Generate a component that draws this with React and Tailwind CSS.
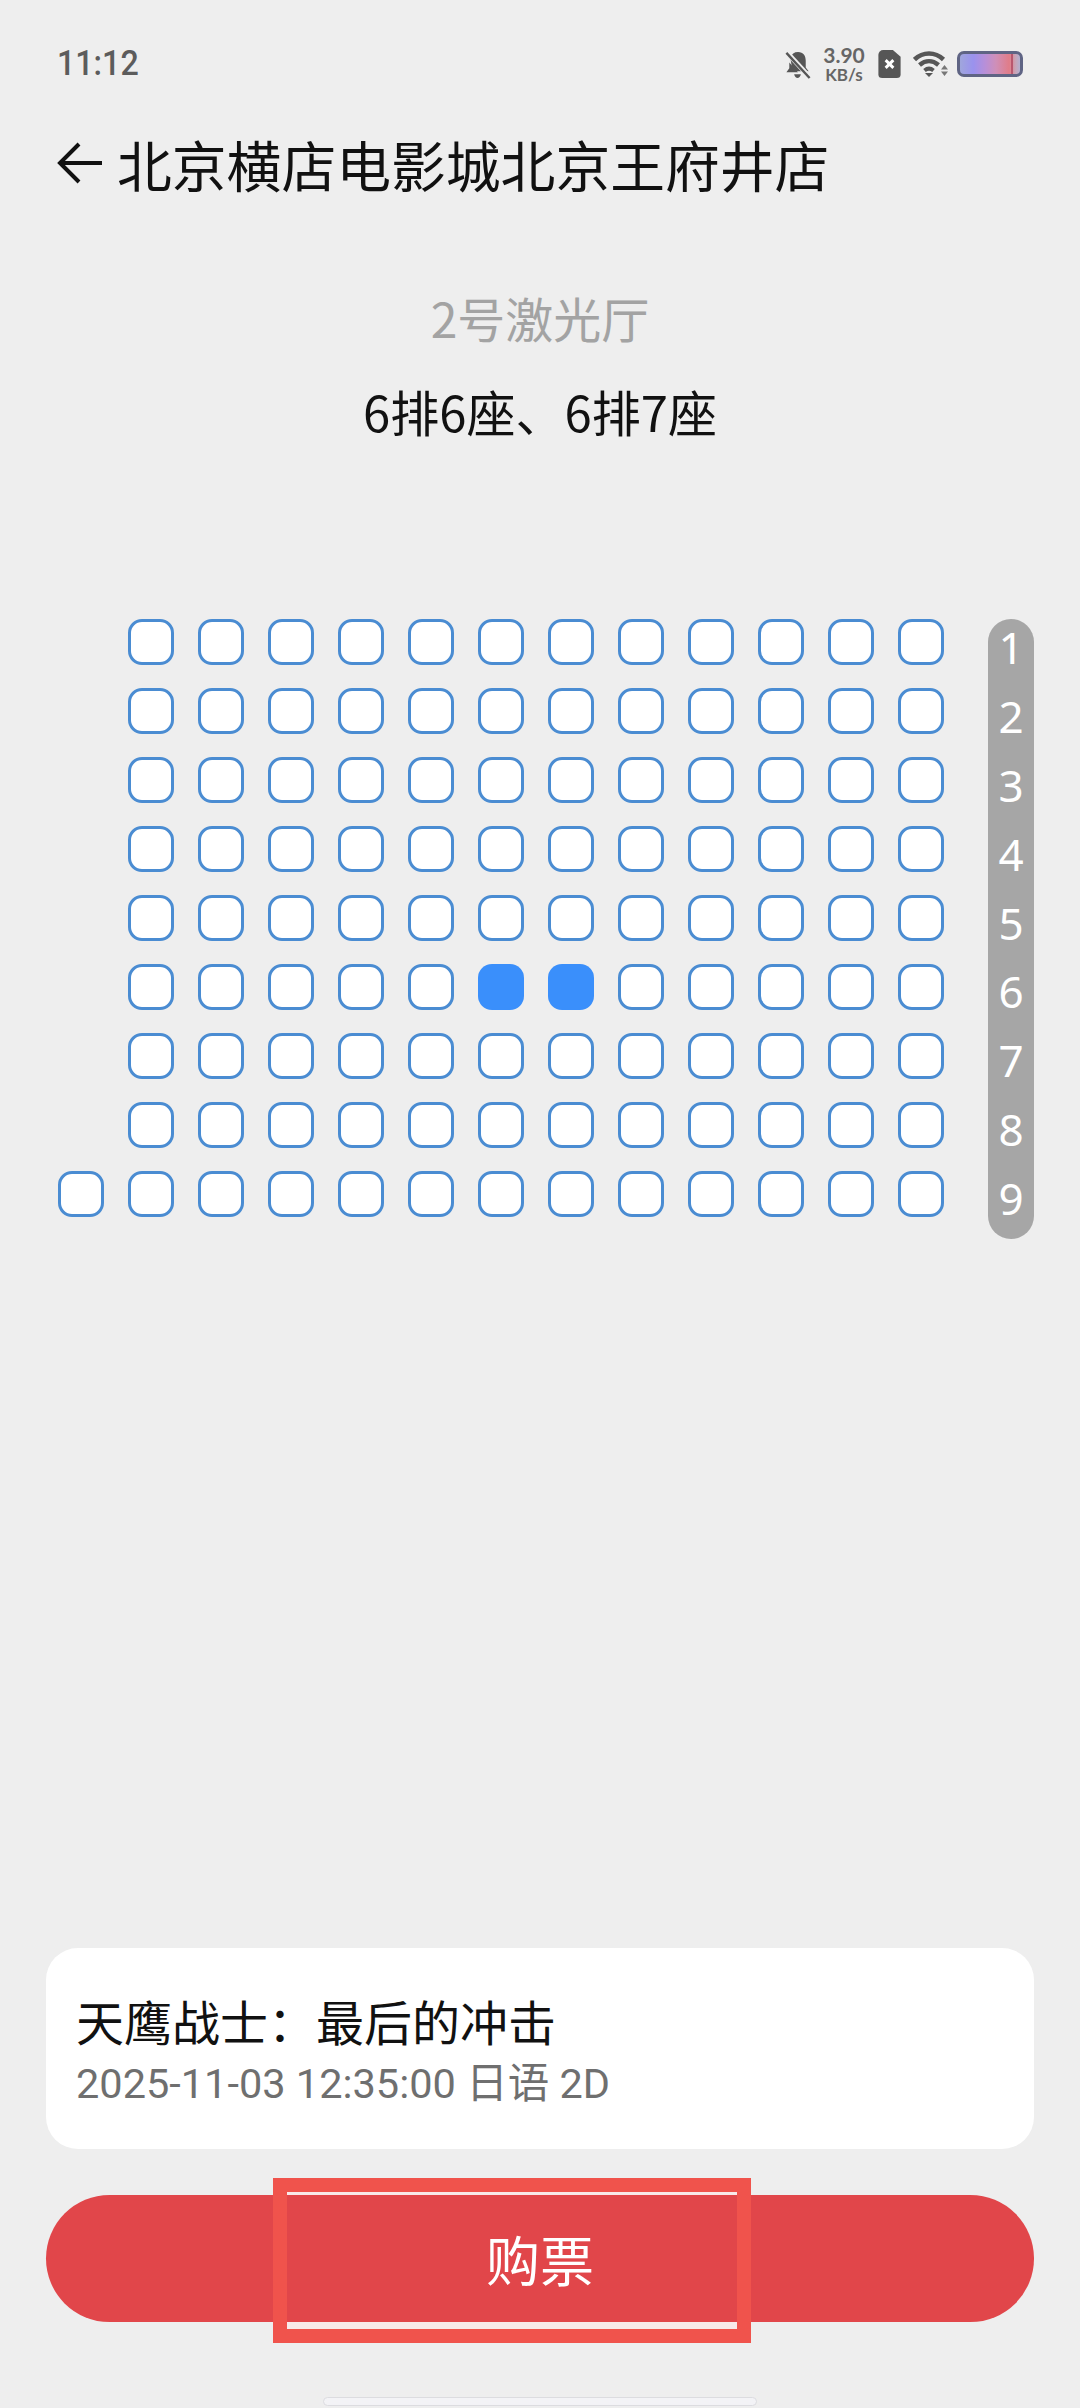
const cjk = "font-['Noto_Sans_CJK_SC','Noto_Sans',sans-serif]";
const rows = [1, 2, 3, 4, 5, 6, 7, 8, 9];
const cols = [0, 1, 2, 3, 4, 5, 6, 7, 8, 9, 10, 11, 12];

const StatusIcons = () => (
  <div className="flex items-center">
    <svg width="26" height="29" viewBox="0 0 26 30" className="mr-[11px]">
      <path d="M13 2c5.600 0 8 4 8 9v7l3 4H7.500L5 8C6.500 4 9 2 13 2z" fill="#565656" />
      <path d="M4 13v6l-3 4h12z" fill="#565656" />
      <path d="M9 25h7c-.5 2.500-2 4-3.500 4S9.500 27.500 9 25z" fill="#565656" />
      <path d="M1 2l24 26" stroke="#eeeeee" strokeWidth="5" />
      <path d="M1 3l24 26" stroke="#565656" strokeWidth="2.500" />
    </svg>
    <div className="mr-[12px] flex w-[44px] flex-col items-center font-['Lato',sans-serif] font-bold text-[#666666]">
      <span className="text-[21px] leading-[21px]">3.90</span>
      <span className="text-[17px] leading-[19px]">KB/s</span>
    </div>
    <svg width="23" height="28" viewBox="0 0 23 29" className="mr-[12px]">
      <path d="M5 0h10l8 7v18a4 4 0 0 1-4 4H4a4 4 0 0 1-4-4V5a5 5 0 0 1 5-5z" fill="#565656" />
      <path d="M7.500 10.500l8 8m0-8l-8 8" stroke="#ffffff" strokeWidth="3" />
    </svg>
    <svg width="35" height="26" viewBox="0 0 35 26" className="mr-[9px]">
      <path d="M1.500 8.500c8.500-8 20.500-8 29 0" fill="none" stroke="#565656" strokeWidth="4.500" />
      <path d="M6.500 14c6-5 13-5 19 0" fill="none" stroke="#565656" strokeWidth="4.500" />
      <path d="M11.500 19.500c3-2.500 6-2.500 9 0" fill="none" stroke="#565656" strokeWidth="4" />
      <path d="M12 22h8l-4 4z" fill="#565656" />
      <path d="M31.500 14l3.500 4.500h-7zM28 20.500h7L31.500 25z" fill="#777777" />
    </svg>
    <div className="h-[26px] w-[66px] rounded-[7px] border-[3px] border-[#5f6484] bg-[linear-gradient(90deg,#a0a6dc_0%,#9a92ee_22%,#b88fd8_42%,#cf8fb8_60%,#e07c88_82%,#c9a3b5_92%,#b3b0d0_100%)]">
      <div className="ml-[51px] h-full w-[2px] bg-[#b9576e]" />
    </div>
  </div>
);

const Seat = ({ selected }) => (
  <div
    className={
      selected
        ? "h-[46px] w-[46px] rounded-[14px] bg-[#3a8ffb]"
        : "h-[46px] w-[46px] rounded-[14px] border-[3px] border-[#4a8cd2] bg-white"
    }
  />
);

const SeatMap = () => (
  <div className="mt-[173px] flex items-start pl-[58px]">
    <div className="grid w-[886px] grid-cols-[repeat(13,46px)] gap-x-[24px] gap-y-[23px]">
      {rows.map((row) =>
        cols.map((col) =>
          col === 0 && row !== 9 ? (
            <div key={`${row}-${col}`} />
          ) : (
            <Seat key={`${row}-${col}`} selected={row === 6 && (col === 6 || col === 7)} />
          ),
        ),
      )}
    </div>
    <div className="ml-[44px] flex h-[620px] w-[46px] flex-col items-center rounded-full bg-[#a6a6a6]">
      {rows.map((row) => (
        <span
          key={row}
          className="h-[69px] font-['Noto_Sans',sans-serif] text-[44px] leading-[56px] text-white"
        >
          {row}
        </span>
      ))}
    </div>
  </div>
);

const App = () => {
  return (
    <div className={`relative flex h-[2408px] w-[1080px] flex-col overflow-hidden bg-[#eeeeee] ${cjk}`}>
      <div className="flex items-center justify-between pl-[57px] pr-[57px] pt-[44px]">
        <span className="origin-left scale-x-[0.92] font-['Roboto',sans-serif] text-[35px] font-medium leading-[38px] text-[#5c5c5c]">
          11:12
        </span>
        <StatusIcons />
      </div>

      <div className="mt-[40px] flex items-center pl-[57px]">
        <svg width="46" height="44" viewBox="0 0 46 44" className="mr-[14px]">
          <path d="M22 3L3 22l19 19M3 22h42" fill="none" stroke="#111111" strokeWidth="4" />
        </svg>
        <span className="text-[54.800px] leading-[78px] text-[#111111]">北京横店电影城北京王府井店</span>
      </div>

      <div className="mt-[80px] text-center text-[48px] leading-[70px] text-[#a3a3a3]">2号激光厅</div>
      <div className="mt-[24px] text-center text-[49px] leading-[70px] text-[#111111]">6排6座、6排7座</div>

      <SeatMap />

      <div className="mx-[46px] mt-auto flex h-[201px] flex-col justify-center rounded-[32px] bg-white px-[30px] pt-[8px]">
        <span className="text-[48px] leading-[62px] text-[#111111]">天鹰战士：最后的冲击</span>
        <span className="font-['Roboto','Noto_Sans_CJK_SC',sans-serif] text-[41.500px] leading-[66px] text-[#6f6f6f]">
          2025-11-03 12:35:00 日语 2D
        </span>
      </div>

      <div className="mx-[46px] mt-[46px] flex h-[127px] items-center justify-center rounded-full bg-[#e1464a] text-[54px] text-white">
        <span>购票</span>
      </div>

      <div className="mx-auto mb-[2px] mt-[75px] h-[9px] w-[434px] rounded-full border border-[#dcdce0] bg-[#f3f3f6]" />

      {/* annotation drawn over the buy button */}
      <div className="absolute left-[273px] top-[2178px] h-[165px] w-[478px] border-[14px] border-[#f0534c]">
        <div className="h-[3px] bg-[#f8e9e9]" />
        <div className="mt-[127px] h-[7px] bg-[#f8e9e9]" />
      </div>
    </div>
  );
};

export default App;
